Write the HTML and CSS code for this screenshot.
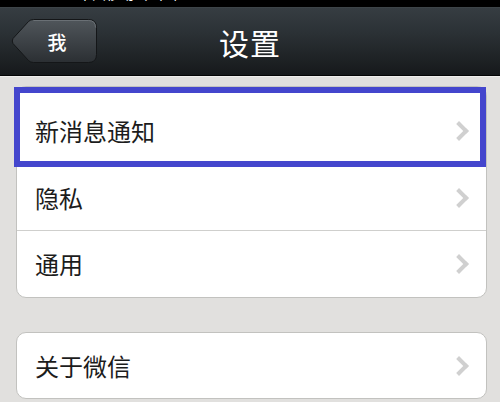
FILE: index.html
```html
<!DOCTYPE html>
<html>
<head>
<meta charset="utf-8">
<link rel="stylesheet" href="styles.css">
</head>
<body>
<div class="screen">
  <div class="status"><span class="status-text">中国移动 令 下午</span></div>
  <div class="nav">
    <div class="back">
      <svg class="back-shape" width="86" height="44" viewBox="0 0 86 44">
        <defs>
          <linearGradient id="bg" x1="0" y1="0" x2="0" y2="1">
            <stop offset="0" stop-color="#50565b"/>
            <stop offset="1" stop-color="#2b2f33"/>
          </linearGradient>
        </defs>
        <path d="M22.5 0.5 H77.5 Q85.5 0.5 85.5 8.5 V35.5 Q85.5 43.5 77.5 43.5 H22.5 Q19.5 43.5 17.5 41.5 L2 24.5 Q0.5 22 2 19.5 L17.5 2.5 Q19.5 0.5 22.5 0.5 Z" fill="url(#bg)" stroke="#141618" stroke-width="1"/>
        <path d="M22.5 1.5 H77.5 Q84.5 1.5 84.5 8.5" fill="none" stroke="#6a7075" stroke-width="1"/>
      </svg>
      <span class="back-label">我</span>
    </div>
    <div class="title">设置</div>
  </div>
  <div class="content">
    <div class="card">
      <div class="row row-first"><span class="label">新消息通知</span><span class="chev"></span></div>
      <div class="row"><span class="label">隐私</span><span class="chev"></span></div>
      <div class="row row-last"><span class="label">通用</span><span class="chev"></span></div>
    </div>
    <div class="card card-second">
      <div class="row row-single"><span class="label">关于微信</span><span class="chev"></span></div>
    </div>
    <div class="focus"></div>
  </div>
</div>
</body>
</html>
```
FILE: styles.css
```css
html, body {
  margin: 0;
  padding: 0;
}
body {
  width: 500px;
  height: 402px;
  overflow: hidden;
  background: #e1e0de;
  font-family: "Noto Sans CJK SC", "Noto Sans", sans-serif;
}
.screen {
  width: 500px;
  height: 402px;
  position: relative;
  overflow: hidden;
}
.status {
  height: 7px;
  background: #000;
  overflow: hidden;
  position: relative;
}
.status-text {
  position: absolute;
  left: 78px;
  top: -16px;
  color: #fff;
  font-size: 14px;
  line-height: 18px;
  white-space: nowrap;
  font-family: "Noto Sans CJK SC", sans-serif;
}
.nav {
  height: 67px;
  background: linear-gradient(to bottom, #363d42 0%, #2a3034 40%, #16191b 100%);
  border-top: 1px solid #3d4448;
  border-bottom: 1px solid #050606;
  position: relative;
  display: flex;
  align-items: center;
  justify-content: center;
}
.back {
  position: absolute;
  left: 11px;
  top: 11px;
  width: 86px;
  height: 44px;
}
.back-shape {
  position: absolute;
  left: 0;
  top: 0;
}
.back-label {
  position: absolute;
  left: 0;
  top: 0;
  padding-left: 6px;
  box-sizing: border-box;
  width: 86px;
  height: 44px;
  display: flex;
  align-items: center;
  justify-content: center;
  color: #fff;
  font-size: 19px;
  font-weight: 500;
}
.title {
  color: #fff;
  font-size: 30px;
  line-height: 1;
  letter-spacing: 1px;
}
.content {
  position: relative;
  padding: 9px 13px 0 16px;
  border-top: 1px solid #f0efed;
}
.card {
  background: #fff;
  border: 1px solid #c2c2bf;
  border-radius: 10px;
}
.card-second {
  margin-top: 34px;
}
.row {
  display: flex;
  align-items: center;
  justify-content: space-between;
  height: 65px;
  padding: 0 16px 0 18px;
  border-top: 1px solid #cfcfcd;
}
.row-first {
  border-top: none;
  height: 67px;
  padding-top: 10px;
}
.row-last {
  height: 66px;
}
.row-single {
  border-top: none;
  height: 65px;
}
.label {
  font-size: 24px;
  color: #1c1c1c;
  line-height: 1;
}
.chev {
  width: 10px;
  height: 10px;
  border-top: 4px solid #d0d0d0;
  border-right: 4px solid #d0d0d0;
  transform: rotate(45deg);
  margin-right: 4px;
}
.focus {
  position: absolute;
  left: 14px;
  top: 10px;
  width: 460px;
  height: 68px;
  border: 6px solid #4446cd;
  pointer-events: none;
}
```
